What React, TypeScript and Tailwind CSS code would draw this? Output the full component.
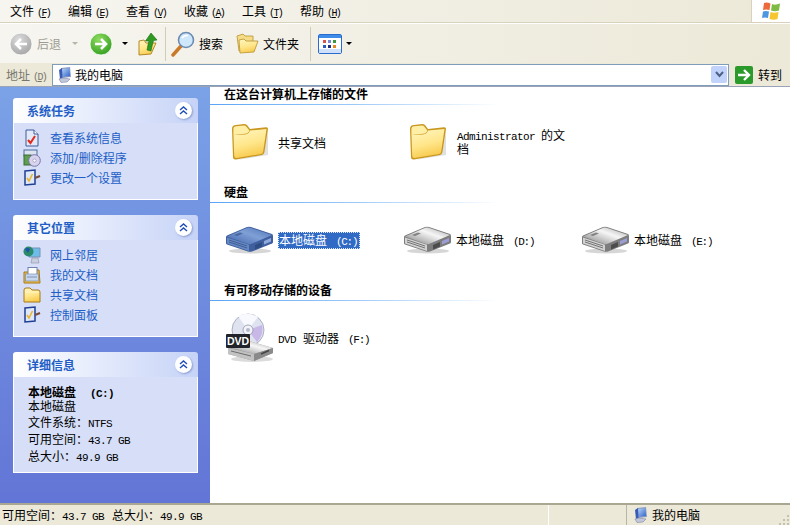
import type { ReactNode } from "react";

const cjk = "font-['Noto_Sans_CJK_SC','Liberation_Sans',sans-serif]";

// latin in the old bitmap font is 6px wide per char
function M({ children, className = "" }: { children: ReactNode; className?: string }) {
  return (
    <span className={`font-['Liberation_Mono',monospace] text-[11px] leading-none tracking-[-0.6px] ${className}`}>
      {children}
    </span>
  );
}

// "(C:)" style drive letters run a little narrower
function Letter({ children }: { children: ReactNode }) {
  return (
    <span className="ml-[9px] font-['Liberation_Mono',monospace] text-[11px] leading-none tracking-[-1.3px]">
      {children}
    </span>
  );
}

function Defs() {
  return (
    <svg className="absolute h-0 w-0" aria-hidden="true">
      <defs>
        <linearGradient id="folder" x1="0" y1="0" x2="0.3" y2="1">
          <stop offset="0" stopColor="#fff6c2" />
          <stop offset="0.6" stopColor="#ffe68a" />
          <stop offset="1" stopColor="#f8cc52" />
        </linearGradient>
        <linearGradient id="silver" x1="0" y1="1" x2="1" y2="0">
          <stop offset="0" stopColor="#777777" />
          <stop offset="0.35" stopColor="#c4c4c4" />
          <stop offset="0.6" stopColor="#f6f6f6" />
          <stop offset="1" stopColor="#a2a2a2" />
        </linearGradient>
        <linearGradient id="blueTop" x1="0" y1="1" x2="1" y2="0">
          <stop offset="0" stopColor="#3f63a8" />
          <stop offset="0.55" stopColor="#7f9fd6" />
          <stop offset="1" stopColor="#4d72b3" />
        </linearGradient>
        <radialGradient id="green" cx="0.4" cy="0.3" r="0.8">
          <stop offset="0" stopColor="#8fdc5f" />
          <stop offset="1" stopColor="#2c9a1c" />
        </radialGradient>
        <radialGradient id="gray" cx="0.4" cy="0.3" r="0.8">
          <stop offset="0" stopColor="#dcdcdc" />
          <stop offset="1" stopColor="#a0a0a0" />
        </radialGradient>
        <linearGradient id="monitor" x1="0" y1="0" x2="1" y2="1">
          <stop offset="0" stopColor="#b7d6f8" />
          <stop offset="1" stopColor="#2f62c8" />
        </linearGradient>
      </defs>
    </svg>
  );
}

function BigFolder() {
  return (
    <svg width="38" height="38" viewBox="0 0 38 38" className="shrink-0">
      <path d="M33 30 L37 8 L37 32 L6 37Z" fill="#000" opacity="0.12" />
      <path d="M2 34 Q2 37 5 36.5 L31 32 Q33 31.5 33.5 29 L37 6 Q37 4 35 4.2 L19 6 L16 2 Q15 1 13 1 L5 2 Q1 2 1 6 Z" fill="#c9971f" />
      <path d="M3.2 33 Q3.5 35.3 5.5 35 L30 31 Q32 30.6 32.2 28.5 L35.5 6 L19 7.6 Q18 11 14 11.5 L2.5 12 Z" fill="url(#folder)" />
      <path d="M2.4 12 L2.4 6 Q2.4 3.4 5 3.2 L13 2.4 Q14.6 2.4 15.2 3.4 L18.4 7.6 Q17.5 10.5 14 10.8Z" fill="#ffeea6" />
    </svg>
  );
}

function Drive({ blue }: { blue?: boolean }) {
  const top = blue ? "url(#blueTop)" : "url(#silver)";
  const side = blue ? "#3f5f9e" : "#7d7d7d";
  const front = blue ? "#6688c2" : "#d2d2d2";
  const dark = blue ? "#2f4d85" : "#4c4c4c";
  return (
    <svg width="50" height="28" viewBox="0 0 50 28" className="shrink-0">
      <ellipse cx="25" cy="25" rx="21" ry="2.6" fill="#000" opacity="0.16" />
      <path d="M1 11 Q1 10 2 9.5 L22 1 Q24 0.4 26 1 L47 8 Q48 8.6 48 10 L48 16 Q48 17 47 17.5 L27 25.5 Q25 26 23 25.5 L2 18.5 Q1 18 1 17Z" fill={side} />
      <path d="M2 10.6 L23 1.6 Q24 1.2 25.5 1.8 L47 9 L26 18 Q24.5 18.6 23 18Z" fill={top} />
      <path d="M2 11.4 L24 18.8 L24 25 L2 17.6Z" fill={front} />
      <path d="M4 14 L22 20 M4 16 L22 22" stroke={dark} strokeWidth="0.7" />
      <path d="M30 19 L37 16 L37 20.5 L30 23.5Z" fill={dark} />
      <path d="M39 15 L46 12 L46 15.5 L39 18.5Z" fill={blue ? "#8fa9de" : "#9d9dd6"} />
      <path d="M9 9 L15 6.5 L18 7.5 L12 10Z" fill={dark} opacity="0.6" />
    </svg>
  );
}

function DvdDrive() {
  return (
    <svg width="50" height="50" viewBox="0 0 50 50" className="shrink-0">
      <circle cx="23" cy="17" r="16" fill="#dfe3f0" stroke="#9aa0b8" strokeWidth="0.8" />
      <path d="M23 17 L13 3 Q23 -2 33 4Z" fill="#f8f8ff" />
      <path d="M23 17 L37 12 Q39 22 32 29Z" fill="#c8b8e8" />
      <circle cx="23" cy="17" r="5" fill="#f4f4f8" stroke="#8d93ab" strokeWidth="0.8" />
      <circle cx="23" cy="17" r="2" fill="#b4b8ca" />
      <ellipse cx="27" cy="46" rx="21" ry="3" fill="#000" opacity="0.14" />
      <path d="M3 34 L24 28 L48 35 L48 40 L29 48 L3 41Z" fill="#9b9b9b" />
      <path d="M3 34 L24 28 L48 35 L29 41Z" fill="url(#silver)" />
      <path d="M3 35 L29 41 L29 48 L3 41Z" fill="#c2c2c2" />
      <path d="M29 41 L48 35 L48 40 L29 48Z" fill="#8a8a8a" />
      <path d="M6 38 L26 43" stroke="#555" strokeWidth="0.8" />
      <path d="M36 41 L44 37.5" stroke="#444" strokeWidth="1.4" />
      <rect x="1" y="21" width="24" height="14" rx="1" fill="#20242a" />
      <text x="13" y="32" textAnchor="middle" fontSize="10.5" fontWeight="700" fontFamily="Liberation Sans" fill="#fff">
        DVD
      </text>
    </svg>
  );
}

function Monitor({ size = 14 }: { size?: number }) {
  return (
    <svg width={size} height={size + 2} viewBox="0 0 14 16" className="shrink-0">
      <path d="M3 1 L12 0 L13 10 L4 11Z" fill="#8d9cc2" />
      <path d="M4 2 L11.5 1.2 L12 9 L4.5 9.8Z" fill="url(#monitor)" />
      <path d="M1 3 L4 1 L4.5 11 L2 12Z" fill="#3a5bb5" />
      <path d="M1 12 L5 11 L12 12 L9 15 L3 15.5Z" fill="#c3c8d8" stroke="#6c77a0" strokeWidth="0.5" />
    </svg>
  );
}

function Circle({ fill, children }: { fill: string; children: ReactNode }) {
  return (
    <svg width="24" height="24" viewBox="0 0 24 24" className="block shrink-0">
      <circle cx="12" cy="12" r="11" fill={fill} stroke="#ffffff" strokeWidth="0.8" />
      {children}
    </svg>
  );
}

function Caret({ className }: { className: string }) {
  return <span className={`h-0 w-0 border-x-[3px] border-t-[3px] border-x-transparent border-t-black ${className}`} />;
}

function UpFolder() {
  return (
    <svg width="20" height="24" viewBox="0 0 20 24" className="block shrink-0">
      <path d="M1 23 L13 22 L18 11 L8 11 L6 8 L1 9Z" fill="url(#folder)" stroke="#a97f18" strokeWidth="0.9" />
      <path d="M9 18 Q10 12 11 9 L7.5 9 L13 1 L19 8 L15.5 8.5 Q14 14 13 19Z" fill="#2f9a22" stroke="#1a6d14" strokeWidth="0.6" />
    </svg>
  );
}

function Search() {
  return (
    <svg width="24" height="26" viewBox="0 0 24 26" className="block shrink-0">
      <path d="M2 24 L10 15" stroke="#c9792a" strokeWidth="3.4" strokeLinecap="round" />
      <circle cx="15" cy="9" r="7.5" fill="#cfe7fb" stroke="#6e8bb3" strokeWidth="1.6" />
      <path d="M11 7 Q13 4 17 4.5" stroke="#fff" strokeWidth="1.6" fill="none" />
    </svg>
  );
}

function Folders() {
  return (
    <svg width="23" height="21" viewBox="0 0 23 21" className="block shrink-0">
      <path d="M1 3 L7 1 L9 3 L17 3 L17 14 L3 18Z" fill="#f6dc86" stroke="#b69330" strokeWidth="0.8" />
      <path d="M4 20 L18 19 L22 8 L10 8 L8 6 L3 7Z" fill="url(#folder)" stroke="#b69330" strokeWidth="0.8" />
    </svg>
  );
}

function ViewsIcon() {
  return (
    <svg width="24" height="20" viewBox="0 0 24 20" className="block shrink-0">
      <rect x="0.5" y="0.5" width="23" height="19" rx="1.5" fill="#fff" stroke="#2a6bd0" />
      <rect x="1" y="1" width="22" height="3" fill="#3f8be8" />
      <rect x="1" y="15" width="22" height="4" fill="#cfe0f8" />
      <rect x="5" y="6" width="3" height="3" fill="#d9534f" />
      <rect x="10" y="6" width="3" height="3" fill="#7a8ad0" />
      <rect x="15" y="6" width="3" height="3" fill="#3c9a3c" />
      <rect x="5" y="11" width="3" height="3" fill="#2a5bc0" />
      <rect x="10" y="11" width="3" height="3" fill="#1f2f7f" />
      <rect x="15" y="11" width="3" height="3" fill="#e08a20" />
    </svg>
  );
}

function XpLogo() {
  return (
    <svg width="20" height="20" viewBox="0 0 20 20">
      <path d="M3 2 Q6 1 9.5 2.5 L8.5 9 Q5 7.8 2 9Z" fill="#ec6b3c" />
      <path d="M11 3 Q14 4.5 19 2.5 L18 9.5 Q14 11 10 9.5Z" fill="#7fba42" />
      <path d="M2 10.5 Q5 9.5 8 10.5 L7 17 Q4 15.8 1 17Z" fill="#4f96e0" />
      <path d="M9.5 11 Q13 12.5 17.5 11 L16.5 18 Q13 19.5 8.5 18Z" fill="#f7c52e" />
    </svg>
  );
}

function DocCheck() {
  return (
    <svg width="16" height="18" viewBox="0 0 16 18">
      <path d="M2 1 L10 1 L14 5 L14 17 L2 17Z" fill="#e3e9f8" stroke="#3d5a9a" />
      <path d="M10 1 L10 5 L14 5" fill="#fff" stroke="#3d5a9a" />
      <path d="M4 11 L6.5 14 L11 7" stroke="#e2291d" strokeWidth="2" fill="none" />
    </svg>
  );
}

function AddRemove() {
  return (
    <svg width="18" height="18" viewBox="0 0 18 18">
      <rect x="1" y="1" width="13" height="6" fill="#dbe2f0" stroke="#4f6c9e" />
      <rect x="1" y="6" width="7" height="10" fill="#5d9e4f" stroke="#3f6a3a" />
      <circle cx="11.5" cy="11.5" r="5.8" fill="#d8d4ee" stroke="#7876a8" />
      <circle cx="11.5" cy="11.5" r="1.6" fill="#fff" stroke="#7876a8" strokeWidth="0.5" />
    </svg>
  );
}

function Settings() {
  return (
    <svg width="18" height="18" viewBox="0 0 18 18">
      <path d="M2 2 L12 1 L12 15 L2 16Z" fill="#dfe8fa" stroke="#1e3f94" strokeWidth="1.5" />
      <path d="M4 9 L6 12 L9.5 5" stroke="#e8b52a" strokeWidth="1.6" fill="none" />
      <path d="M12 9 L17 7" stroke="#7a4a3a" strokeWidth="2" />
    </svg>
  );
}

function Globe() {
  return (
    <svg width="18" height="18" viewBox="0 0 18 18">
      <path d="M6 2 L17 2 L17 11 L6 11Z" fill="#6cbde8" stroke="#7c8fb5" />
      <circle cx="5.5" cy="5.5" r="5" fill="#2a8a6a" />
      <path d="M2 3 Q5 1 7 3 L5 7Z" fill="#2050b0" />
      <path d="M9 12 L15 12 L16 17 L8 17Z" fill="#c8cedd" stroke="#7c8398" strokeWidth="0.5" />
    </svg>
  );
}

function MyDocs() {
  return (
    <svg width="18" height="18" viewBox="0 0 18 18">
      <path d="M1 6 L6 6 L7 4 L16 4 L17 17 L1 17Z" fill="#f0bf46" stroke="#a67818" />
      <rect x="5" y="1.5" width="9" height="9" fill="#fff" stroke="#6d82ad" />
      <rect x="2.5" y="8" width="13" height="7" fill="#c7d6ef" stroke="#6d82ad" strokeWidth="0.6" />
      <path d="M4 11 H14" stroke="#6d82ad" strokeWidth="0.8" />
    </svg>
  );
}

function SmallFolder() {
  return (
    <svg width="18" height="16" viewBox="0 0 18 16">
      <path d="M1 3 Q1 1 3 1 L7 1 L9 3 L15 3 Q17 3 17 5 L17 15 L1 15Z" fill="url(#folder)" stroke="#a67818" />
      <path d="M2 5 H16" stroke="#fff6c4" />
    </svg>
  );
}

function Panel({ title, children, bodyClass }: { title: string; children: ReactNode; bodyClass: string }) {
  return (
    <section className="ml-[13px] w-[185px]">
      <header className="flex h-[25px] items-center justify-between rounded-t-[3px] bg-gradient-to-r from-white to-[#c6d3f7] pl-[14px] pr-[6px]">
        <h2 className="text-[12px] font-bold text-[#215dc6]">{title}</h2>
        <span className="flex h-[17px] w-[17px] items-center justify-center rounded-full bg-white shadow-[1px_1px_2px_#8c9fd0]">
          <svg width="9" height="9" viewBox="0 0 9 9">
            <path d="M1 4 L4.5 1 L8 4 M1 8 L4.5 5 L8 8" stroke="#1f4db8" strokeWidth="1.4" fill="none" />
          </svg>
        </span>
      </header>
      <div className={`border-x border-b border-white bg-[#d6dff7] ${bodyClass}`}>{children}</div>
    </section>
  );
}

function TaskLink({ icon, label }: { icon: ReactNode; label: ReactNode }) {
  return (
    <li className="flex h-[20px] items-center text-[12px] text-[#215dc6]">
      <span className="flex w-[22px] justify-center">{icon}</span>
      <span className="ml-[7px]">{label}</span>
    </li>
  );
}

function SectionHead({ title }: { title: string }) {
  return (
    <div>
      <h3 className="h-[17px] pl-[14px] text-[12px] leading-[14px] font-bold text-black">{title}</h3>
      <div className="h-px w-[290px] bg-gradient-to-r from-[#5aa5f5] via-[#9cc9f8] to-white" />
    </div>
  );
}

function Item({ icon, children }: { icon: ReactNode; children: ReactNode }) {
  return (
    <div className="flex w-[178px] items-center">
      <div className="flex w-[52px] justify-center pr-[4px]">{icon}</div>
      <div className="min-w-0 text-[12px] leading-[13px] text-black">{children}</div>
    </div>
  );
}

function Hotkey({ k }: { k: string }) {
  return (
    <span className="ml-[3px] font-['Liberation_Mono',monospace] text-[10px] leading-none tracking-[-1.6px]">
      (<span className="underline">{k}</span>)
    </span>
  );
}

function MenuItem({ label, k }: { label: string; k: string }) {
  return (
    <span className="w-[58px] whitespace-nowrap text-[12px] text-black">
      {label}
      <Hotkey k={k} />
    </span>
  );
}

function InfoRow({ children }: { children: ReactNode }) {
  return <p className="mt-[5px] flex h-[12px] items-baseline leading-[12px]">{children}</p>;
}

export default function App() {
  return (
    <div className={`flex h-[525px] w-[790px] flex-col overflow-hidden bg-white ${cjk}`}>
      <Defs />
      {/* menu */}
      <div className="flex h-[23px] items-center border-b border-[#d8d2bd] bg-gradient-to-r from-[#f6f5f0] to-[#ece9d8] pl-[10px]">
        <MenuItem label="文件" k="F" />
        <MenuItem label="编辑" k="E" />
        <MenuItem label="查看" k="V" />
        <MenuItem label="收藏" k="A" />
        <MenuItem label="工具" k="T" />
        <MenuItem label="帮助" k="H" />
        <div className="ml-auto flex h-full w-[39px] items-center justify-center border-l border-[#d8d2bd] bg-white">
          <XpLogo />
        </div>
      </div>
      {/* toolbar */}
      <div className="flex h-[40px] items-center border-t border-white bg-gradient-to-r from-[#f6f5f0] to-[#ece9d8] pl-[9px] text-[12px] text-black">
        <Circle fill="url(#gray)">
          <path d="M18 12 H8 M12 7 L7 12 L12 17" stroke="#fff" strokeWidth="2.6" fill="none" />
        </Circle>
        <span className="ml-[4px] text-[#9d9d92]">后退</span>
        <span className="ml-[11px] h-0 w-0 border-x-[3px] border-t-[3px] border-x-transparent border-t-[#b5b5a8]" />
        <span className="ml-[11px]">
          <Circle fill="url(#green)">
            <path d="M6 12 H16 M12 7 L17 12 L12 17" stroke="#fff" strokeWidth="2.6" fill="none" />
          </Circle>
        </span>
        <Caret className="ml-[9px]" />
        <span className="ml-[10px]"><UpFolder /></span>
        <span className="ml-[7px] h-[34px] w-px bg-[#d0ccb8]" />
        <span className="ml-[5px]"><Search /></span>
        <span className="ml-[4px]">搜索</span>
        <span className="ml-[13px]"><Folders /></span>
        <span className="ml-[4px]">文件夹</span>
        <span className="ml-[11px] h-[34px] w-px bg-[#d0ccb8]" />
        <span className="ml-[7px]"><ViewsIcon /></span>
        <Caret className="ml-[4px]" />
      </div>
      {/* address */}
      <div className="flex h-[23px] items-center bg-[#ece9d8] text-[12px]">
        <span className="ml-[6px] w-[46px] whitespace-nowrap text-[#77776c]">
          地址
          <Hotkey k="D" />
        </span>
        <div className="flex h-[22px] w-[677px] items-center border border-[#7f9db9] bg-white">
          <span className="ml-[5px]"><Monitor /></span>
          <span className="ml-[3px] text-black">我的电脑</span>
          <span className="ml-auto mr-[1px] flex h-[17px] w-[16px] items-center justify-center rounded-[2px] bg-[#c1d3fb]">
            <svg width="9" height="7" viewBox="0 0 9 7">
              <path d="M1 1 L4.5 5 L8 1" stroke="#4d6185" strokeWidth="2" fill="none" />
            </svg>
          </span>
        </div>
        <span className="ml-[6px] flex h-[18px] w-[18px] items-center justify-center rounded-[2px] bg-[#2a9a2a]">
          <svg width="14" height="12" viewBox="0 0 14 12">
            <path d="M1 6 H11 M7 1 L12 6 L7 11" stroke="#fff" strokeWidth="2.4" fill="none" />
          </svg>
        </span>
        <span className="ml-[5px] text-black">转到</span>
      </div>
      {/* body */}
      <div className="flex min-h-0 flex-1 border-t border-[#9aa3b8]">
        <aside className="flex w-[210px] shrink-0 flex-col gap-[15px] bg-gradient-to-b from-[#7ba2e7] to-[#6375d6] pt-[11px]">
          <Panel title="系统任务" bodyClass="h-[77px] pt-[5px] pl-[7px]">
            <ul>
              <TaskLink icon={<DocCheck />} label="查看系统信息" />
              <TaskLink icon={<AddRemove />} label={<>添加/删除程序</>} />
              <TaskLink icon={<Settings />} label="更改一个设置" />
            </ul>
          </Panel>
          <Panel title="其它位置" bodyClass="h-[97px] pt-[5px] pl-[7px]">
            <ul>
              <TaskLink icon={<Globe />} label="网上邻居" />
              <TaskLink icon={<MyDocs />} label="我的文档" />
              <TaskLink icon={<SmallFolder />} label="共享文档" />
              <TaskLink icon={<Settings />} label="控制面板" />
            </ul>
          </Panel>
          <Panel title="详细信息" bodyClass="h-[96px] pt-[9px] pl-[14px] text-[12px] text-black">
            <p className="flex h-[14px] items-baseline leading-[12px] font-bold">本地磁盘<M className="ml-[14px] font-bold">(C:)</M></p>
            <p className="h-[11px] leading-[12px]">本地磁盘</p>
            <InfoRow>文件系统：<M>NTFS</M></InfoRow>
            <InfoRow>可用空间：<M>43.7 GB</M></InfoRow>
            <InfoRow>总大小：<M>49.9 GB</M></InfoRow>
          </Panel>
        </aside>
        <main className="flex-1 bg-white">
          <SectionHead title="在这台计算机上存储的文件" />
          <div className="flex h-[80px] pb-[6px] pl-[16px]">
            <Item icon={<BigFolder />}>共享文档</Item>
            <Item icon={<BigFolder />}>
              <span className="block w-[115px] pl-px leading-[12px]">
                <span className="block h-[14px]"><M>Administrator</M><span className="ml-[6px]">的文</span></span>
                <span className="block h-[12px]">档</span>
              </span>
            </Item>
          </div>
          <SectionHead title="硬盘" />
          <div className="flex h-[80px] pb-[6px] pl-[16px]">
            <Item icon={<Drive blue />}>
              <span className="block whitespace-nowrap border border-dotted border-[#dfe8fb] bg-[#316ac5] pr-[2px] text-white">本地磁盘<Letter>(C:)</Letter></span>
            </Item>
            <Item icon={<Drive />}><span className="whitespace-nowrap">本地磁盘<Letter>(D:)</Letter></span></Item>
            <Item icon={<Drive />}><span className="whitespace-nowrap">本地磁盘<Letter>(E:)</Letter></span></Item>
          </div>
          <SectionHead title="有可移动存储的设备" />
          <div className="flex h-[80px] pb-[6px] pl-[16px]">
            <Item icon={<DvdDrive />}>
              <span className="whitespace-nowrap"><M>DVD</M><span className="ml-[7px]">驱动器</span><Letter>(F:)</Letter></span>
            </Item>
          </div>
        </main>
      </div>
      {/* status */}
      <footer className="flex h-[22px] items-center border-t-2 border-[#a9a691] bg-[#ece9d8] text-[12px] text-black">
        <span className="ml-[2px] flex w-[546px] items-baseline whitespace-nowrap">
          可用空间：<M>43.7 GB</M><span className="ml-[8px]">总大小：</span><M>49.9 GB</M>
        </span>
        <span className="h-full w-[78px] border-l border-white" />
        <span className="flex h-full flex-1 items-center border-l border-[#b8b5a2] pl-[7px]">
          <Monitor />
          <span className="ml-[4px]">我的电脑</span>
          <svg width="12" height="12" viewBox="0 0 12 12" className="ml-auto self-end">
            <path d="M9 2h2v2H9zM5 6h2v2H5zM9 6h2v2H9zM1 10h2v2H1zM5 10h2v2H5zM9 10h2v2H9z" fill="#c4c1ae" />
          </svg>
        </span>
      </footer>
    </div>
  );
}
